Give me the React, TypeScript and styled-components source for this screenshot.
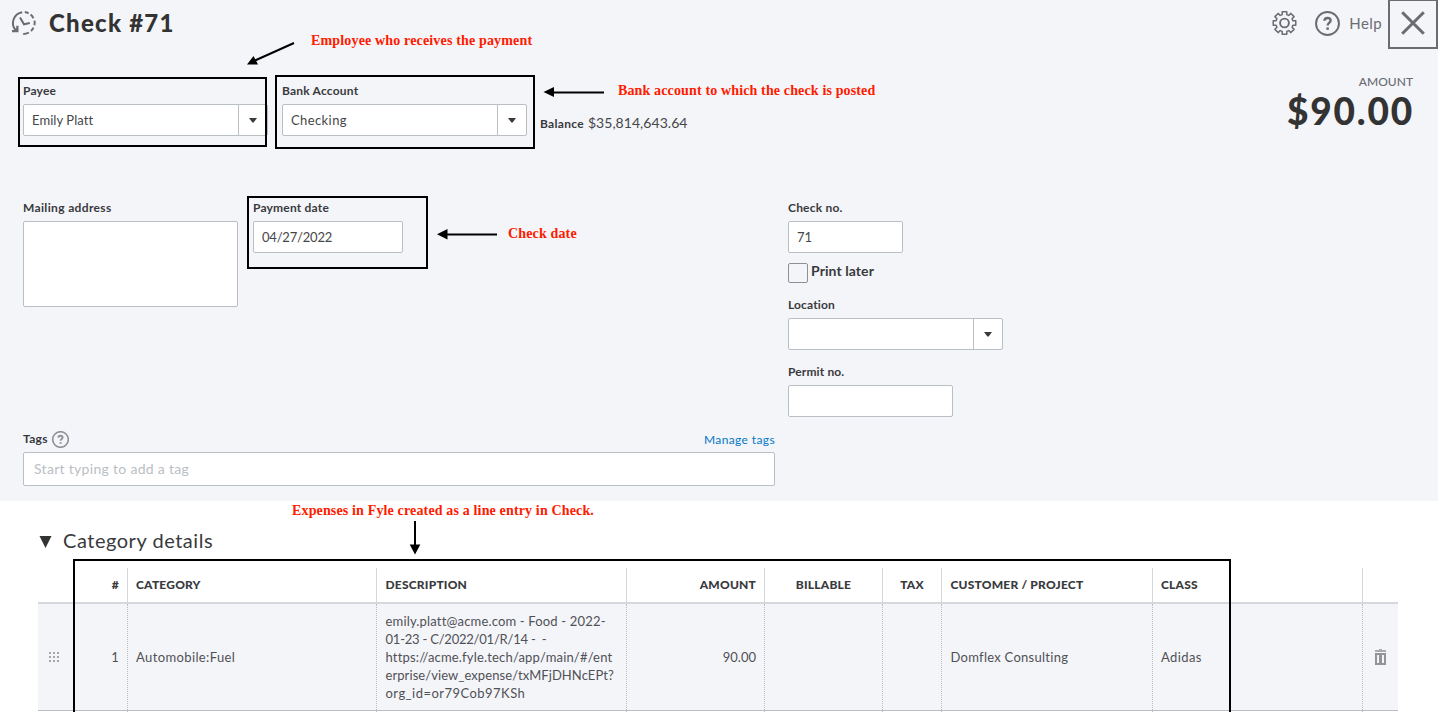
import React from "react";
import styled, { createGlobalStyle, css } from "styled-components";

const GlobalStyle = createGlobalStyle`
  * { box-sizing: border-box; }
  body { margin: 0; background: #fff; font-family: Lato, "Open Sans", sans-serif; color: #393a3d; }
`;

const Page = styled.div`
  position: relative;
  width: 1438px;
  height: 712px;
  overflow: hidden;
  background: #fff;
`;

const FormPanel = styled.section`
  height: 501px;
  background: #f4f5f9;
`;

const Header = styled.header`
  display: flex;
  align-items: center;
  height: 49px;
  padding-left: 10px;
`;

const Title = styled.h1`
  margin: -3px auto 0 12px;
  font-size: 24px;
  line-height: 28px;
  font-weight: 900;
  letter-spacing: 1.25px;
  color: #333;
`;

const IconSlot = styled.span`
  display: flex;
  margin-top: -3px;
`;

const HelpGroup = styled.div`
  display: flex;
  align-items: center;
  height: 26px;
  margin: -3px 0 0 17px;
`;

const HelpLink = styled.span`
  margin: 0 6px 0 9px;
  font-size: 15px;
  letter-spacing: 0.4px;
  color: #6b6c72;
`;

const CloseButton = styled.button`
  display: flex;
  align-items: center;
  justify-content: center;
  width: 50px;
  height: 49px;
  padding: 0 0 3px;
  border: 2px solid #6b6c72;
  border-top-width: 1px;
  background: transparent;
`;

const TopRow = styled.div`
  display: flex;
  height: 117px;
  padding: 35px 25px 0 23px;
`;

const MiddleRow = styled.div`
  display: flex;
  height: 231px;
  padding: 35px 25px 0 23px;
`;

const Field = styled.div<{ $w: number; $mr?: number; $mb?: number }>`
  width: ${(p) => p.$w}px;
  margin-right: ${(p) => p.$mr ?? 0}px;
  margin-bottom: ${(p) => p.$mb ?? 0}px;
  flex: none;
`;

const Label = styled.label<{ $ls?: number }>`
  display: block;
  height: 14px;
  margin-bottom: 6px;
  font-size: 12px;
  line-height: 14px;
  font-weight: 700;
  letter-spacing: ${(p) => p.$ls ?? 0.2}px;
  white-space: nowrap;
`;

const Box = styled.div<{ $h?: number }>`
  display: flex;
  align-items: center;
  height: ${(p) => p.$h ?? 32}px;
  border: 1px solid #babec5;
  border-radius: 2px;
  background: #fff;
`;

const Value = styled.span<{ $ls?: number }>`
  flex: 1;
  padding-left: 8px;
  font-size: 13px;
  line-height: 18px;
  letter-spacing: ${(p) => p.$ls ?? 0.3}px;
  color: #45464a;
`;

const DropButton = styled.span`
  display: flex;
  align-items: center;
  justify-content: center;
  align-self: stretch;
  width: 29px;
  border-left: 1px solid #babec5;
`;

const Balance = styled.div`
  display: flex;
  align-items: baseline;
  margin: 30px auto 0 13px;
  font-size: 14px;
  line-height: 18px;
  letter-spacing: 0.04px;
  color: #45464a;
  b { margin-right: 4px; font-size: 12px; letter-spacing: 0.3px; color: #393a3d; }
`;

const Total = styled.div`
  margin-top: -9px;
  text-align: right;
`;

const TotalLabel = styled.div`
  font-size: 12px;
  line-height: 14px;
  font-weight: 500;
  color: #6b6c72;
`;

const TotalValue = styled.div`
  margin-right: -1px;
  font-size: 37px;
  line-height: 43px;
  font-weight: 900;
  letter-spacing: 1.8px;
  color: #333;
`;

const SideColumn = styled.div`
  margin-left: 385px;
`;

const PrintLater = styled.div`
  display: flex;
  height: 20px;
  margin: 10px 0 15px;
  gap: 3px;
  font-size: 14px;
  line-height: 16px;
  font-weight: 700;
  letter-spacing: 0.08px;
`;

const Checkbox = styled.span`
  width: 20px;
  height: 20px;
  border: 1px solid #8d9096;
  border-radius: 2px;
`;

const TagsBlock = styled.div`
  width: 752px;
  margin: 35px 0 0 23px;
`;

const TagsHeader = styled.div`
  display: flex;
  align-items: center;
  height: 14px;
  margin-bottom: 6px;
  gap: 4px;
  label { margin: 0; }
`;

const ManageLink = styled.a`
  margin-left: auto;
  font-size: 12px;
  letter-spacing: 0.38px;
  color: #0077c5;
`;

const TagsInput = styled(Box)`
  padding: 0 0 1px 10px;
  font-size: 14px;
  letter-spacing: 0.3px;
  color: #babec5;
`;

const DetailsSection = styled.section`
  padding: 25px 40px 0 38px;
`;

const DetailsTitle = styled.h2`
  display: flex;
  align-items: center;
  height: 28px;
  margin: 0 0 14px;
  gap: 11px;
  font-size: 20px;
  font-weight: 400;
  letter-spacing: 0.53px;
  svg { margin: 3px 0 0 1px; }
`;

const columns = "33px 57px 249px 250px 138px 118px 59px 211px 210px 35px";

const TableRow = styled.div<{ $head?: boolean; $next?: boolean }>`
  display: grid;
  grid-template-columns: ${columns};
  ${(p) =>
    p.$head
      ? css`
          height: 36px;
          border-bottom: 2px solid #d4d7dc;
        `
      : css`
          height: 107px;
          border-bottom: 1px solid #babec5;
          background: ${p.$next ? "#fff" : "#f4f5f9"};
        `}
`;

const Cell = styled.div<{
  $head?: boolean;
  $align?: "left" | "right" | "center";
  $bare?: boolean;
  $ls?: number;
  $pad?: number;
}>`
  display: flex;
  align-items: center;
  justify-content: ${(p) =>
    p.$align === "right" ? "flex-end" : p.$align === "center" ? "center" : "flex-start"};
  padding: 0 8px 0 ${(p) => p.$pad ?? 8}px;
  font-size: ${(p) => (p.$head ? 12 : 13)}px;
  line-height: 18px;
  font-weight: ${(p) => (p.$head ? 900 : 400)};
  letter-spacing: ${(p) => p.$ls ?? 0.2}px;
  color: ${(p) => (p.$head ? "#393a3d" : "#505156")};
  white-space: pre;
  border-right: ${(p) =>
    p.$bare ? "0" : p.$head ? "1px solid #d4d7dc" : "1px dotted #babec5"};
`;

const Line = styled.span<{ $ls: number }>`
  display: block;
  letter-spacing: ${(p) => p.$ls}px;
`;

const Frame = styled.div<{ $x: number; $y: number; $w: number; $h: number }>`
  position: absolute;
  left: ${(p) => p.$x}px;
  top: ${(p) => p.$y}px;
  width: ${(p) => p.$w}px;
  height: ${(p) => p.$h}px;
  border: 2px solid #000;
`;

const Note = styled.div<{ $x: number; $y: number; $ls: number }>`
  position: absolute;
  left: ${(p) => p.$x}px;
  top: ${(p) => p.$y}px;
  font: 700 14px/16px "Liberation Serif", serif;
  letter-spacing: ${(p) => p.$ls}px;
  white-space: nowrap;
  color: #ff1a00;
`;

const Arrows = styled.svg`
  position: absolute;
  left: 0;
  top: 0;
  pointer-events: none;
`;

const Caret = () => (
  <svg width="8" height="5" viewBox="0 0 8 5">
    <path d="M0 0h8L4.6 4.6h-1.2z" fill="#393a3d" />
  </svg>
);

const HistoryIcon = () => (
  <svg width="27" height="26" viewBox="0 0 27 26" fill="none" stroke="#6b6c72" strokeWidth="2">
    <path d="M12.200 2.200A11 11 0 0 0 5.600 20.200" />
    <path d="M14.800 2.100a11 11 0 0 1 3.800 1.200M20.600 4.600a11 11 0 0 1 2.800 3.600M24.500 10.600a11 11 0 0 1-.1 4.600M23.500 17.600a11 11 0 0 1-2.500 3.300M18.900 22.500a11 11 0 0 1-5.700 1.500" strokeDasharray="none" />
    <path d="M2 21.200h5.400v-5.400" strokeWidth="2.200" />
    <path d="M4.500 20.500l2.500-2.500v2.500z" fill="#6b6c72" strokeWidth="1" />
    <path d="M10 7.600l4 6.700 5.800-1.200" />
  </svg>
);

const gearPath = (() => {
  const pts: string[] = [];
  for (let i = 0; i < 8; i++) {
    const a = (i * Math.PI) / 4;
    const at = (r: number, d: number) =>
      `${(13 + r * Math.sin(a + d)).toFixed(2)} ${(13 - r * Math.cos(a + d)).toFixed(2)}`;
    pts.push(at(8.7, -0.27), at(11.5, -0.2), at(11.5, 0.2), at(8.7, 0.27));
  }
  return `M${pts.join("L")}Z`;
})();

const GearIcon = () => (
  <svg width="26" height="26" viewBox="0.5 0 26 26" fill="none" stroke="#6b6c72" strokeWidth="1.5" strokeLinejoin="round">
    <path d={gearPath} />
    <circle cx="13" cy="13" r="4.4" strokeWidth="1.9" />
  </svg>
);

const QuestionIcon = ({ size, color, width }: { size: number; color: string; width: number }) => (
  <svg width={size} height={size} viewBox="0 0 24 24" fill="none" stroke={color} strokeWidth={width}>
    <circle cx="12" cy="12" r="11" />
    <path d="M9 9.400C9.100 7.500 10.300 6.700 12 6.700c1.800 0 3 .9 3 2.500 0 2.200-2.900 2.200-2.900 4.600" strokeWidth={width + 0.4} />
    <path d="M12.100 15.700v2.400" strokeWidth={width + 0.5} />
  </svg>
);

const CloseIcon = () => (
  <svg width="24" height="24" viewBox="0 0 24 24" stroke="#6b6c72" strokeWidth="3">
    <path d="M1.200 1.200l21.600 21.600M22.800 1.200L1.200 22.800" />
  </svg>
);

const GripIcon = () => (
  <svg width="11" height="10" viewBox="0 0 11 10" fill="#a5a6aa">
    {[0, 4, 8].map((y) => [0, 4, 8].map((x) => <rect key={`${x}${y}`} x={x} y={y} width="2" height="2" />))}
  </svg>
);

const TrashIcon = () => (
  <svg width="12" height="16" viewBox="0 0 12 16">
    <path d="M0 1h4V0h3v1h4v2H0z" fill="#a9aaae" />
    <path d="M0 4h11v12H0zM2 6v8h2V6zM7 6v8h2V6z" fillRule="evenodd" fill="#939498" />
  </svg>
);

const Select = ({ value, spacing }: { value?: string; spacing?: number }) => (
  <Box>
    <Value $ls={spacing}>{value}</Value>
    <DropButton>
      <Caret />
    </DropButton>
  </Box>
);

const description = [
  { text: "emily.platt@acme.com - Food - 2022-", ls: 0.17 },
  { text: "01-23 - C/2022/01/R/14 -  -", ls: -0.22 },
  { text: "https://acme.fyle.tech/app/main/#/ent", ls: 0.18 },
  { text: "erprise/view_expense/txMFjDHNcEPt?", ls: 0.08 },
  { text: "org_id=or79Cob97KSh", ls: 0.47 },
];

export default function App() {
  return (
    <Page>
      <GlobalStyle />
      <FormPanel>
        <Header>
          <IconSlot><HistoryIcon /></IconSlot>
          <Title>Check #71</Title>
          <IconSlot><GearIcon /></IconSlot>
          <HelpGroup>
            <QuestionIcon size={25} color="#6b6c72" width={1.9} />
            <HelpLink>Help</HelpLink>
          </HelpGroup>
          <CloseButton><CloseIcon /></CloseButton>
        </Header>

        <TopRow>
          <Field $w={245} $mr={14}>
            <Label>Payee</Label>
            <Select value="Emily Platt" spacing={0.07} />
          </Field>
          <Field $w={245}>
            <Label>Bank Account</Label>
            <Select value="Checking" spacing={0.4} />
          </Field>
          <Balance><b>Balance</b>$35,814,643.64</Balance>
          <Total>
            <TotalLabel>AMOUNT</TotalLabel>
            <TotalValue>$90.00</TotalValue>
          </Total>
        </TopRow>

        <MiddleRow>
          <Field $w={215} $mr={15}>
            <Label $ls={0.35}>Mailing address</Label>
            <Box $h={86} />
          </Field>
          <Field $w={150}>
            <Label>Payment date</Label>
            <Box><Value $ls={-0.2}>04/27/2022</Value></Box>
          </Field>
          <SideColumn>
            <Field $w={115}>
              <Label>Check no.</Label>
              <Box><Value $ls={0}>71</Value></Box>
            </Field>
            <PrintLater><Checkbox />Print later</PrintLater>
            <Field $w={215} $mb={15}>
              <Label $ls={0.13}>Location</Label>
              <Select />
            </Field>
            <Field $w={165}>
              <Label $ls={0.13}>Permit no.</Label>
              <Box />
            </Field>
          </SideColumn>
        </MiddleRow>

        <TagsBlock>
          <TagsHeader>
            <Label $ls={0.3}>Tags</Label>
            <QuestionIcon size={17} color="#8d9096" width={2.2} />
            <ManageLink>Manage tags</ManageLink>
          </TagsHeader>
          <TagsInput $h={34}>Start typing to add a tag</TagsInput>
        </TagsBlock>
      </FormPanel>

      <DetailsSection>
        <DetailsTitle>
          <svg width="13" height="12" viewBox="0 0 13 12"><path d="M0.500 0h12l-6 12z" fill="#333" /></svg>
          Category details
        </DetailsTitle>
        <TableRow $head>
          <Cell $head $bare />
          <Cell $head $align="right">#</Cell>
          <Cell $head>CATEGORY</Cell>
          <Cell $head $pad={8.5}>DESCRIPTION</Cell>
          <Cell $head $align="right">AMOUNT</Cell>
          <Cell $head $align="center">BILLABLE</Cell>
          <Cell $head $align="center">TAX</Cell>
          <Cell $head $pad={8.5}>CUSTOMER / PROJECT</Cell>
          <Cell $head>CLASS</Cell>
          <Cell $head $bare />
        </TableRow>
        <TableRow>
          <Cell $bare $align="center"><GripIcon /></Cell>
          <Cell $align="right">1</Cell>
          <Cell $ls={0.38}>Automobile:Fuel</Cell>
          <Cell $pad={8.5}>
            <div>
              {description.map((l) => <Line key={l.text} $ls={l.ls}>{l.text}</Line>)}
            </div>
          </Cell>
          <Cell $align="right" $ls={0}>90.00</Cell>
          <Cell />
          <Cell />
          <Cell $ls={0.27} $pad={8.5}>Domflex Consulting</Cell>
          <Cell $ls={0.4}>Adidas</Cell>
          <Cell $bare $align="center"><TrashIcon /></Cell>
        </TableRow>
        <TableRow $next>
          <Cell $bare />
          {columns.split(" ").slice(1, 9).map((_, i) => <Cell key={i} />)}
          <Cell $bare />
        </TableRow>
      </DetailsSection>

      <Frame $x={18} $y={77} $w={249} $h={70} />
      <Frame $x={275} $y={75} $w={260} $h={74} />
      <Frame $x={247} $y={196} $w={181} $h={73} />
      <Frame $x={73} $y={559} $w={1158} $h={160} />

      <Note $x={311} $y={33} $ls={0.16}>Employee who receives the payment</Note>
      <Note $x={618} $y={83} $ls={0.14}>Bank account to which the check is posted</Note>
      <Note $x={508} $y={226} $ls={0.15}>Check date</Note>
      <Note $x={292} $y={503} $ls={0.15}>Expenses in Fyle created as a line entry in Check.</Note>

      <Arrows width="1438" height="712" stroke="#000" strokeWidth="2">
        <path d="M294 43L255 60.500M604 92.500H552M497 234.500H446M415 521V546" />
        <g stroke="none">
          <path d="M247 64.500L253.500 56L258 64.500z" />
          <path d="M543.500 92L554 87V97z" />
          <path d="M437 234.200L447.500 229V239.500z" />
          <path d="M415 554.500L409.700 544.500H420.300z" />
        </g>
      </Arrows>
    </Page>
  );
}
